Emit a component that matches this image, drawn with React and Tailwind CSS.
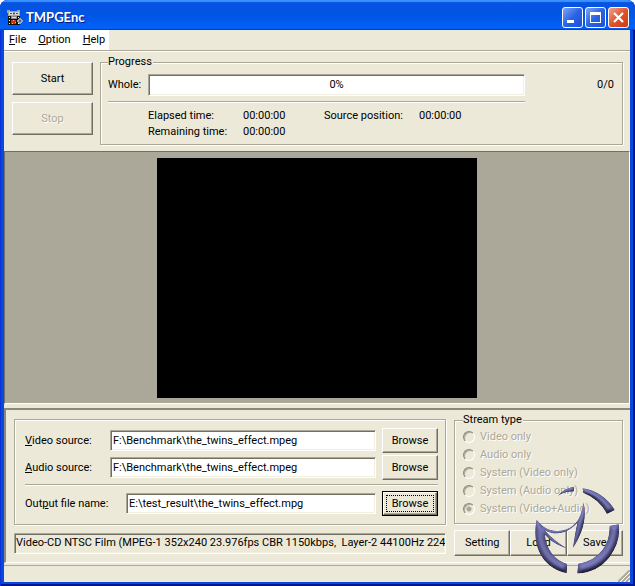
import { useState } from "react";

const GROUP =
  "border border-[#aca899] shadow-[1px_1px_0_#fff,inset_1px_1px_0_#fff]";
const RAISED =
  "border border-t-white border-l-white border-r-[#716f64] border-b-[#716f64] bg-[#ece9d8] shadow-[inset_-1px_-1px_0_#aca899]";
const SUNKEN =
  "border border-t-[#aca899] border-l-[#aca899] border-r-white border-b-white shadow-[inset_1px_1px_0_#716f64,inset_-1px_-1px_0_#f1efe2]";

const STREAM_TYPES = [
  "Video only",
  "Audio only",
  "System (Video only)",
  "System (Audio only)",
  "System (Video+Audio)",
];

export default function App() {
  const [files, setFiles] = useState({
    video: "F:\\Benchmark\\the_twins_effect.mpeg",
    audio: "F:\\Benchmark\\the_twins_effect.mpeg",
    output: "E:\\test_result\\the_twins_effect.mpg",
  });

  function update(name, value) {
    setFiles({ ...files, [name]: value });
  }

  return (
    <div className="bg-white">
      <div className="relative flex min-h-screen flex-col overflow-hidden rounded-t-lg bg-[#0a48dc] font-[Roboto,sans-serif] text-[11px] leading-4 text-black shadow-[inset_1px_0_0_#0831d9,inset_-2px_-2px_0_#00178f]">
        <TitleBar />

        <div className="ml-1 mr-[5px] mb-1 flex flex-1 flex-col bg-[#ece9d8]">
          <MenuBar />
          <TopPanel />

          <main className="flex flex-1 items-center justify-center border-t border-l border-r border-b border-t-[#716f64] border-l-[#716f64] border-r-white border-b-white bg-[#aca899]">
            <div className="h-60 w-80 bg-black" />
          </main>

          <div className="mt-1 flex gap-2 border-t-2 border-l-2 border-b border-t-[#8b887c] border-l-[#8b887c] border-b-white pt-1 pr-[7px] pb-[6px] pl-2">
            <div className="flex min-w-0 flex-1 flex-col gap-2 pt-[5px]">
              <div className={`${GROUP} flex-1 pt-[7px] pr-[7px] pl-[10px]`}>
                <FileRow
                  id="video"
                  label={<><u>V</u>ideo source:</>}
                  value={files.video}
                  onChange={update}
                />
                <FileRow
                  id="audio"
                  label={<><u>A</u>udio source:</>}
                  value={files.audio}
                  onChange={update}
                />
                <hr className="mt-[3px] mb-1 border-t border-b border-t-[#aca899] border-b-white" />
                <FileRow
                  id="output"
                  label={<>Out<u>p</u>ut file name:</>}
                  value={files.output}
                  onChange={update}
                  focused
                />
              </div>
              <div
                className={`${SUNKEN} mb-[2px] h-[21px] overflow-hidden whitespace-pre pt-px pl-px`}
              >
                Video-CD NTSC Film (MPEG-1 352x240 23.976fps CBR 1150kbps,  Layer-2 44100Hz 224
              </div>
            </div>

            <div className="flex w-[169px] flex-col gap-[6px]">
              <fieldset className={`${GROUP} flex-1 px-2 pt-[2px] pb-[5px]`}>
                <legend className="bg-[#ece9d8] pr-px leading-3">Stream type</legend>
                {STREAM_TYPES.map((name, index) => (
                  <label
                    key={name}
                    className="flex h-[18px] items-center gap-[5px] text-[#aca899] [text-shadow:1px_1px_0_#fff]"
                  >
                    <input
                      type="radio"
                      name="stream"
                      disabled
                      defaultChecked={index === 4}
                      className="size-3 appearance-none rounded-full border border-t-[#8b887c] border-l-[#8b887c] border-r-white border-b-white bg-[#ece9d8] shadow-[inset_1px_1px_0_#aca899] checked:bg-[radial-gradient(circle,#aca899_2px,#ece9d8_3px)]"
                    />
                    {name}
                  </label>
                ))}
              </fieldset>
              <div className="grid grid-cols-3">
                {["Setting", "Load", "Save"].map((name) => (
                  <button key={name} className={`${RAISED} h-[26px]`}>
                    {name}
                  </button>
                ))}
              </div>
            </div>
          </div>

          <footer className="mt-[2px] flex h-[17px] items-end justify-end border-t border-[#aca899]">
            <SizeGrip />
          </footer>
        </div>

        <Emblem />
      </div>
    </div>
  );
}

function TitleBar() {
  return (
    <header className="flex h-[30px] items-center bg-linear-to-b from-[#0a52e0] via-[#0055e5] to-[#0364fb] pt-1 pr-[6px] pl-[7px] shadow-[inset_0_2px_1px_#3b93ff,inset_0_-1px_1px_#0140c8]">
      <AppIcon />
      <h1 className="ml-[3px] flex-1 font-[Lato,sans-serif] text-[13px] leading-4 font-bold text-white [text-shadow:1px_1px_0_#0a1883]">
        TMPGEnc
      </h1>
      <div className="flex gap-[2px]">
        <button aria-label="Minimize" className="size-[21px] rounded-[3px] border border-white bg-linear-to-br from-[#7fa4f5] via-[#2a63e4] to-[#1d4fd8]">
          <svg viewBox="0 0 19 19" className="size-[19px]">
            <path d="M4 12h7v3H4z" fill="#fff" />
          </svg>
        </button>
        <button aria-label="Maximize" className="size-[21px] rounded-[3px] border border-white bg-linear-to-br from-[#7fa4f5] via-[#2a63e4] to-[#1d4fd8]">
          <svg viewBox="0 0 19 19" className="size-[19px]">
            <path d="M4 4h11v11H4zM5 7v7h9V7z" fill="#fff" fillRule="evenodd" />
          </svg>
        </button>
        <button aria-label="Close" className="size-[21px] rounded-[3px] border border-white bg-linear-to-br from-[#f0a08a] via-[#e0522c] to-[#cc3c14]">
          <svg viewBox="0 0 19 19" className="size-[19px]">
            <path d="M5 5l9 9M14 5l-9 9" stroke="#fff" strokeWidth="2.2" />
          </svg>
        </button>
      </div>
    </header>
  );
}

function MenuBar() {
  return (
    <nav className="border-b border-[#aca899]">
      <div className="flex h-5 w-[105px] items-center gap-3 bg-white pl-[5px]">
        <button><u>F</u>ile</button>
        <button><u>O</u>ption</button>
        <button><u>H</u>elp</button>
      </div>
    </nav>
  );
}

function TopPanel() {
  return (
    <section className="flex gap-[7px] border-t border-white pt-1 pr-[7px] pb-[6px] pl-2">
      <div className="flex w-[81px] flex-col gap-[7px] pt-[6px]">
        <button className={`${RAISED} h-[33px]`}>Start</button>
        <button
          disabled
          className={`${RAISED} h-[33px] text-[#aca899] [text-shadow:1px_1px_0_#fff]`}
        >
          Stop
        </button>
      </div>

      <fieldset className={`${GROUP} flex-1 pr-2 pb-1 pl-[7px]`}>
        <legend className="bg-[#ece9d8] pr-px leading-3">Progress</legend>
        <div className="mt-[6px] flex items-center">
          <span className="w-10">Whole:</span>
          <div
            role="progressbar"
            aria-valuenow={0}
            className={`${SUNKEN} h-[22px] flex-1 bg-white text-center leading-5`}
          >
            0%
          </div>
          <span className="w-[89px] text-right">0/0</span>
        </div>
        <hr className="mt-[5px] mr-[89px] border-t border-b border-t-[#aca899] border-b-white" />
        <div className="mt-[5px] grid grid-cols-[95px_81px_95px_1fr] pl-10">
          <span>Elapsed time:</span>
          <span>00:00:00</span>
          <span>Source position:</span>
          <span>00:00:00</span>
          <span>Remaining time:</span>
          <span>00:00:00</span>
        </div>
      </fieldset>
    </section>
  );
}

function FileRow({ id, label, value, onChange, focused }) {
  return (
    <div className="flex h-[27px] items-center">
      <label htmlFor={id} className={focused ? "w-[101px]" : "w-[85px]"}>
        {label}
      </label>
      <input
        id={id}
        type="text"
        value={value}
        onChange={(e) => onChange(id, e.target.value)}
        className={`${SUNKEN} h-[21px] min-w-0 flex-1 bg-white pl-[2px]`}
      />
      {focused ? (
        <button className="ml-[6px] h-[25px] w-14 border border-black p-0">
          <span className={`${RAISED} flex h-full p-[2px]`}>
            <span className="flex-1 border border-dotted border-black leading-[15px]">
              Browse
            </span>
          </span>
        </button>
      ) : (
        <button className={`${RAISED} ml-[6px] h-[25px] w-14`}>Browse</button>
      )}
    </div>
  );
}

function SizeGrip() {
  return (
    <svg viewBox="0 0 12 12" className="size-3">
      <path d="M0 12L12 0M4 12l8-8M8 12l4-4" stroke="#aca899" strokeWidth="2" />
      <path d="M2 12L12 2M6 12l6-6M10 12l2-2" stroke="#fff" />
    </svg>
  );
}

// film strip with a pair of reels and a small gear
function AppIcon() {
  return (
    <svg viewBox="0 0 16 16" className="size-4" shapeRendering="crispEdges">
      <path d="M0 1h3v1h7V1h3v6H1V4H0z" fill="#a4a4a4" />
      <path d="M2 3h4v3H2zM8 3h4v3H8z" fill="#dcdcdc" />
      <path d="M3 4h2v1H3zM9 4h2v1H9zM6 4h2v1H6z" fill="#4a4a4a" />
      <path d="M1 7h12v9H1z" fill="#111" />
      <path d="M2 8h1v1H2zM2 11h1v1H2zM2 14h1v1H2zM11 8h1v1h-1zM11 14h1v1h-1z" fill="#fff" />
      <path d="M4 7h6v3H4z" fill="#8a8a8a" />
      <path d="M5 8h4v1H5z" fill="#e0e0e0" />
      <path d="M4 11h5v4H4z" fill="#c83018" />
      <path d="M6 11h1v1H6zM5 14h1v1H5zM8 13h1v1H8z" fill="#f4b49c" />
      <path d="M12 9h2v1h1v1h1v2h-1v1h-1v1h-2v-1h-1v-1h-1v-2h1v-1h1z" fill="#9aa6b8" />
      <path d="M12 11h2v2h-2z" fill="#5a6780" />
    </svg>
  );
}

function Emblem() {
  return (
    <svg
      viewBox="0 0 315 318"
      className="pointer-events-none absolute right-0 bottom-0 h-[106px] w-[105px]"
      aria-hidden="true"
    >
      <defs>
        <filter id="bevel" colorInterpolationFilters="sRGB">
          <feGaussianBlur in="SourceAlpha" stdDeviation="6" result="soft" />
          <feDiffuseLighting in="soft" surfaceScale="12" lightingColor="#8484b8" result="lit">
            <feDistantLight azimuth="260" elevation="60" />
          </feDiffuseLighting>
          <feComposite in="lit" in2="SourceAlpha" operator="in" result="face" />
          <feComposite in="face" in2="SourceGraphic" operator="arithmetic" k2="0.8" k3="0.4" />
        </filter>
      </defs>
      <g fill="#30306c" filter="url(#bevel)">
        <path d="M83 47Q103 25 131 20L132 34Q106 34 83 47Z" />
        <path d="M158 25Q220 35 254 90L231 101Q207 56 160 38Z" />
        <path d="M239 138L266 133Q273 183 239 230Q203 277 142 280L145 251Q190 246 217 211Q240 180 239 138Z" />
        <path d="M20 119C43 151 76 159 110 148C143 135 156 107 160 67C173 116 154 166 129 203C134 173 137 150 143 127C115 159 79 170 43 150C62 172 84 190 112 206C82 196 60 182 44 163C49 209 74 242 111 252L110 279C50 268 2 212 20 119Z" />
      </g>
    </svg>
  );
}
